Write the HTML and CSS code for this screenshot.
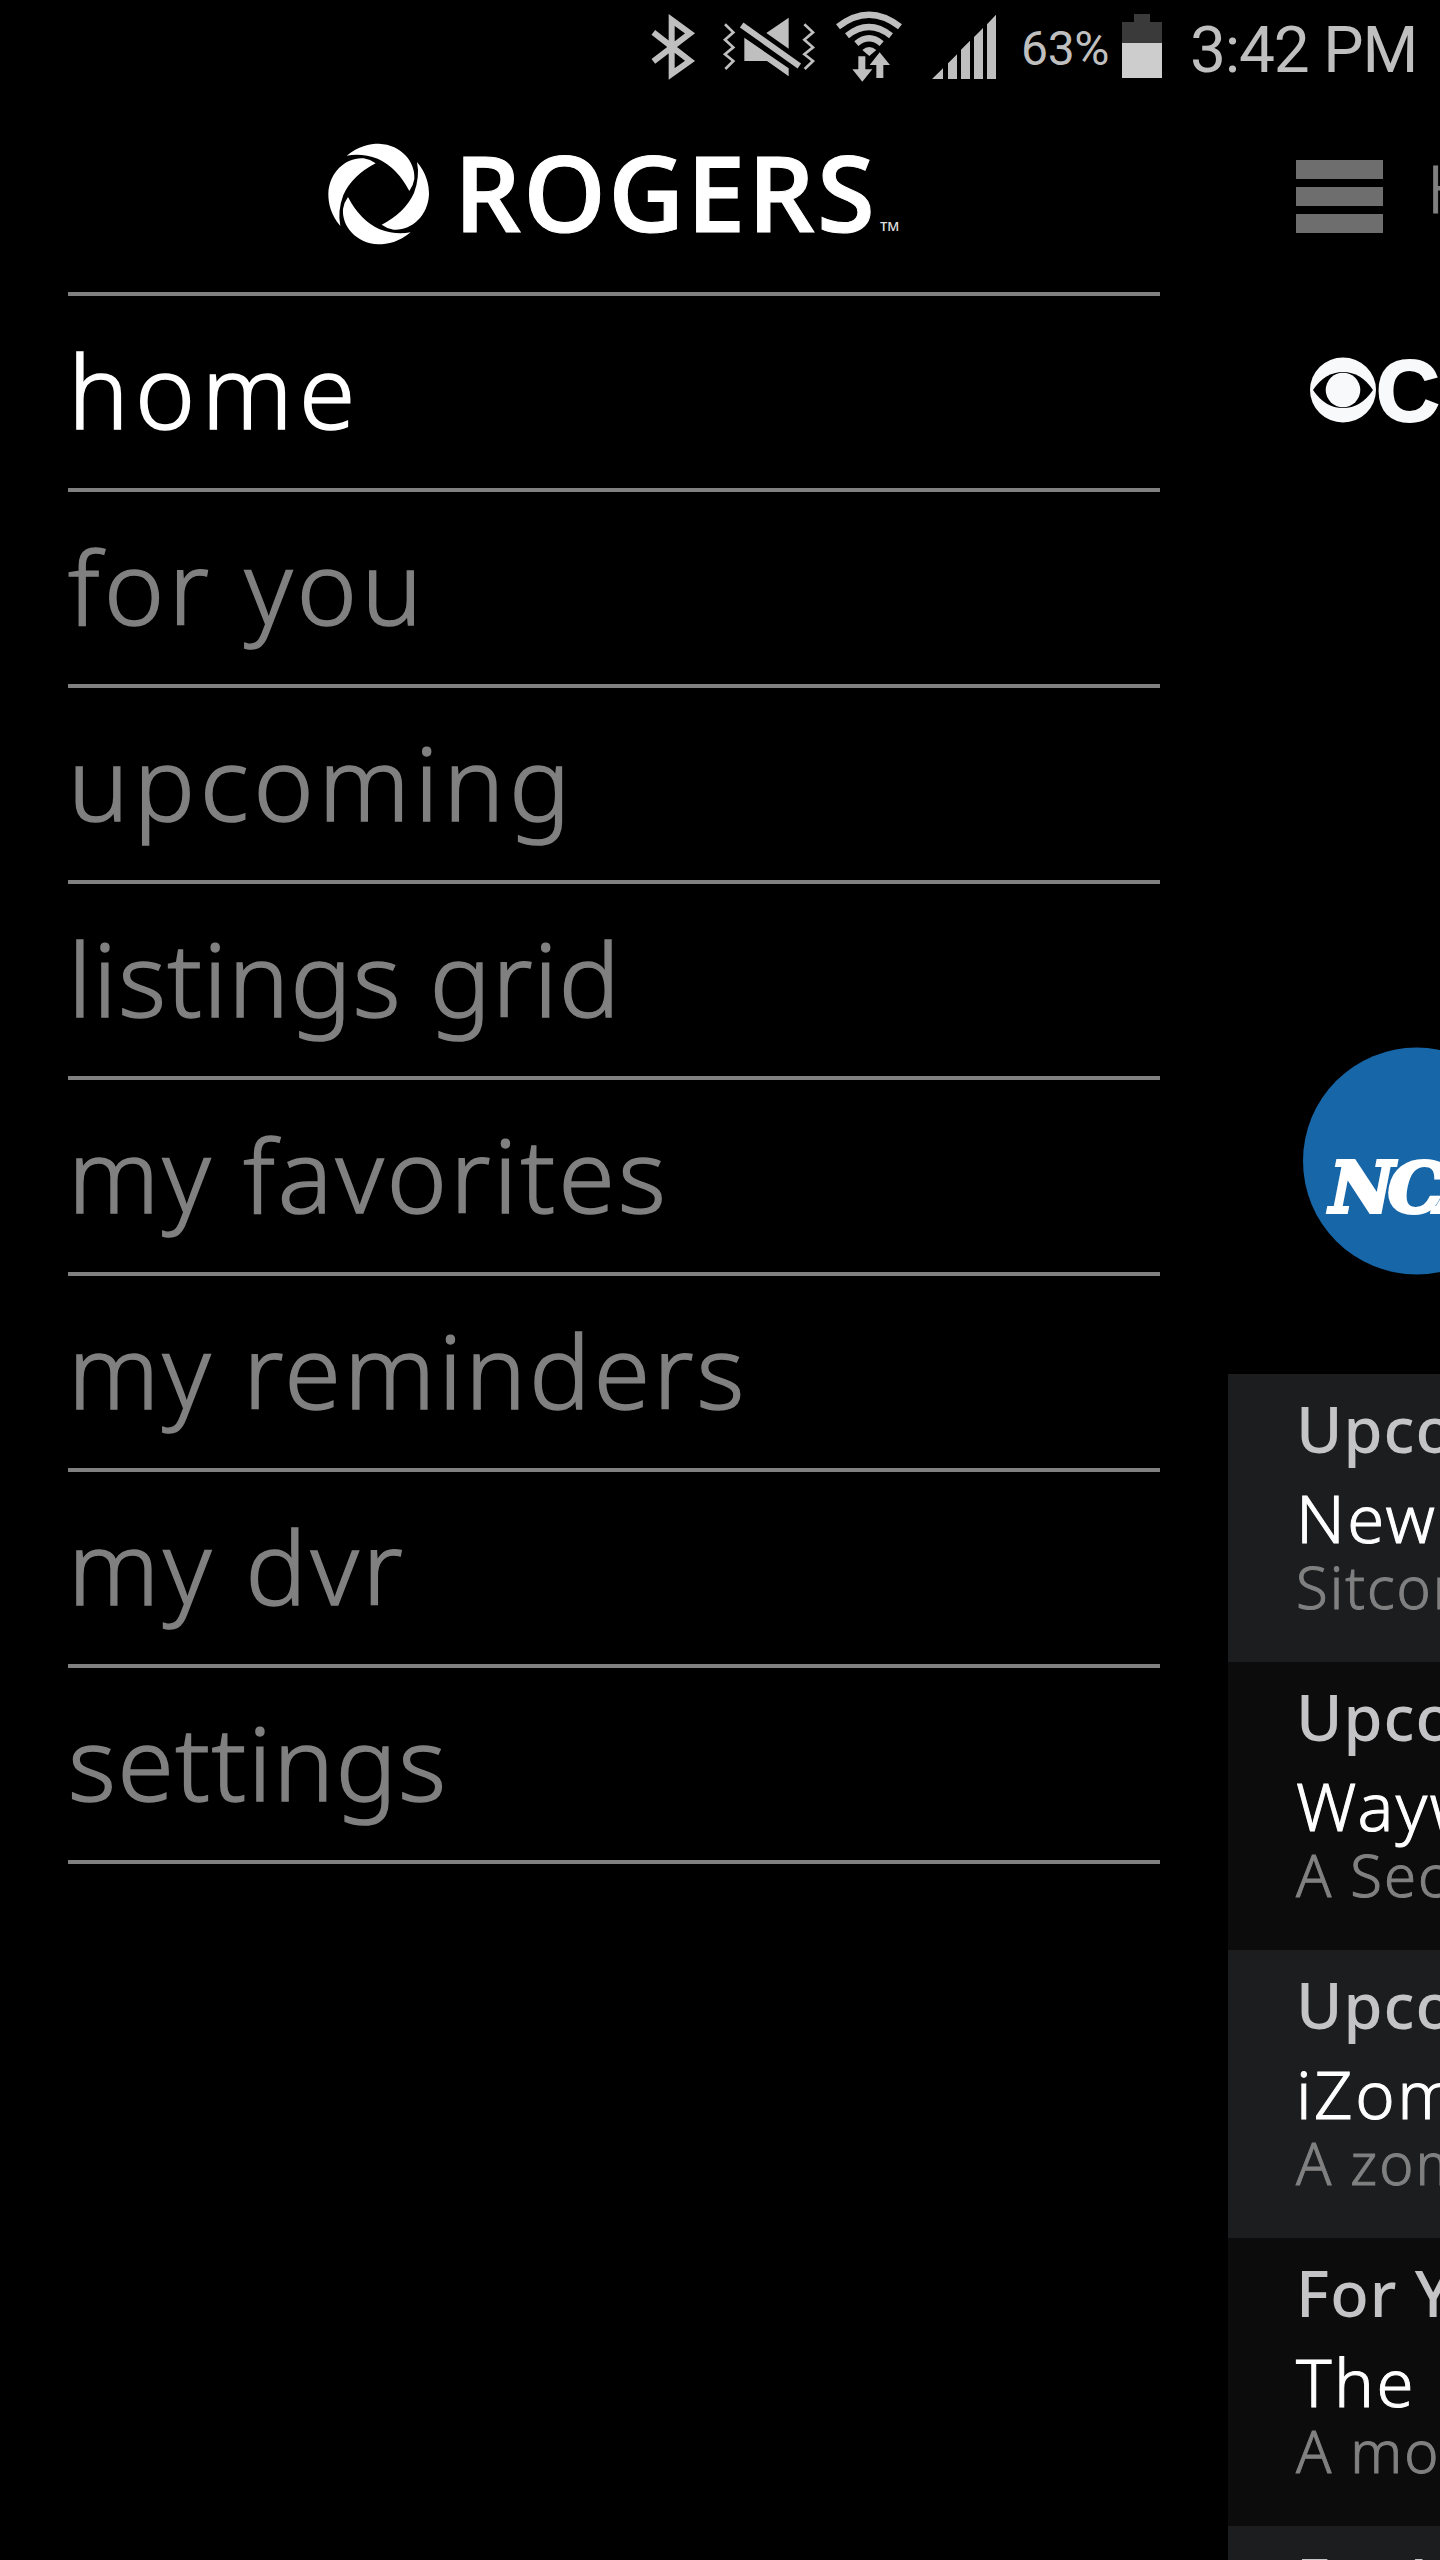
FILE: index.html
```html
<!DOCTYPE html>
<html lang="en">
<head>
    <meta charset="UTF-8">
    <meta name="viewport" content="width=device-width, initial-scale=1.0">
    <title>Rogers</title>
    <link rel="stylesheet" href="styles.css">
</head>
<body>
    <div class="status-bar">
        <svg class="status-icons" width="370" height="100" viewBox="0 0 1110 300">
            <!-- bluetooth -->
            <path d="M70 97L180 183L125 222V60L180 100L70 184" fill="none" stroke="#bfbfbf" stroke-width="18"/>
            <!-- vibrate / muted -->
            <g fill="none" stroke="#bfbfbf" stroke-width="8">
                <path d="M285 73L310 97L285 119L310 142L285 163L310 183L286 207"/>
                <path d="M523 73L549 97L523 119L549 142L523 163L549 183L524 207"/>
            </g>
            <path d="M335 75L508 198" stroke="#bfbfbf" stroke-width="18"/>
            <path d="M476 53V146L409 99ZM343 113L476 205V229L411 183H343Z" fill="#bfbfbf"/>
            <!-- wifi -->
            <g fill="none" stroke="#bfbfbf" stroke-width="19">
                <path d="M624 80Q717 8 810 80"/>
                <path d="M651 107Q717 55 783 107"/>
                <path d="M679 131Q717 99 755 131"/>
            </g>
            <path d="M697 150Q717 132 739 150L718 168ZM685 169H706V208H727L697 245L667 208H685ZM739 234V195H719L749 157L780 195H760V234Z" fill="#bfbfbf"/>
            <!-- signal -->
            <path d="M906 237L939 205V237ZM954 237V190L981 163V237ZM993 237V149L1020 122V237ZM1032 237V111L1059 84V237ZM1071 237V73L1098 44V237Z" fill="#bfbfbf"/>
        </svg>
        <span class="battery-text">63%</span>
        <svg class="battery" width="40" height="64" viewBox="0 0 40 64">
            <path d="M12 0H28V8H40V29H0V8H12Z" fill="#3a3a3a"/>
            <rect y="29" width="40" height="35" fill="#cdcdcd"/>
        </svg>
        <span class="clock">3:42 PM</span>
    </div>

    <div class="screen">
        <div class="menu">
            <div class="brand">
                <svg class="brand-logo" width="102" height="102" viewBox="54 37 306 306">
                    <defs>
                        <path id="blade" d="M110 75C145 46 178 39 207 39C275 42 317 95 313 145Q310 165 298 181Q262 111 203 84Q155 66 110 75Z"/>
                    </defs>
                    <g fill="#fff">
                        <use href="#blade"/>
                        <use href="#blade" transform="rotate(90 206 190)"/>
                        <use href="#blade" transform="rotate(180 206 190)"/>
                        <use href="#blade" transform="rotate(270 206 190)"/>
                    </g>
                </svg>
                <span class="brand-name">ROGERS</span>
                <span class="brand-tm">TM</span>
            </div>
            <ul class="menu-list">
                <li class="active home">home</li>
                <li class="for-you">for you</li>
                <li class="upcoming">upcoming</li>
                <li class="listings">listings grid</li>
                <li class="favorites">my favorites</li>
                <li class="reminders">my reminders</li>
                <li class="dvr">my dvr</li>
                <li class="settings">settings</li>
            </ul>
        </div>

        <div class="content">
            <div class="toolbar">
                <div class="hamburger"><i></i><i></i><i></i></div>
                <span class="page-title">Home</span>
            </div>
            <svg class="cbs" width="132" height="70" viewBox="0 0 132 70">
                <ellipse cx="35" cy="35" rx="33" ry="32.5" fill="#f8f9fa"/>
                <path d="M5 35Q17 17 35 17Q53 17 65 35Q53 53 35 53Q17 53 5 35Z" fill="#000"/>
                <circle cx="35" cy="35" r="17.3" fill="#f8f9fa"/>
                <text class="cbs-text" x="68" y="66">CBS</text>
            </svg>
            <svg class="ncaa" width="138" height="228" viewBox="0 0 138 228">
                <circle cx="114.5" cy="114" r="113.5" fill="#1666a8"/>
                <text class="ncaa-text" x="28" y="165">NCAA</text>
            </svg>
            <div class="shows">
                <div class="show"><h2>Upcoming</h2><h3>New Girl</h3><p>Sitcom</p></div>
                <div class="show"><h2>Upcoming</h2><h3>Wayward</h3><p>A Secret</p></div>
                <div class="show"><h2>Upcoming</h2><h3>iZombie</h3><p>A zombie</p></div>
                <div class="show"><h2>For You</h2><h3>The Blacklist</h3><p>A most</p></div>
                <div class="show"><h2>For You</h2></div>
            </div>
        </div>
    </div>
</body>
</html>
```
FILE: styles.css
```css
* {
    box-sizing: border-box;
}
body {
    margin: 0;
    width: 1440px;
    height: 2560px;
    overflow: hidden;
    background: #000;
    font-family: "Noto Sans", sans-serif;
    color: #808080;
}
.status-bar {
    display: flex;
    align-items: flex-start;
    height: 100px;
    padding-left: 630px;
    font-family: Roboto, sans-serif;
    color: #bfbfbf;
    white-space: nowrap;
}
.status-icons {
    flex: none;
}
.battery-text {
    width: 122px;
    padding: 17px 0 0 21px;
    font-size: 48px;
    line-height: 64px;
    letter-spacing: -0.3px;
}
.battery {
    flex: none;
    margin-top: 14px;
}
.clock {
    padding: 19px 0 0 28px;
    font-size: 64px;
    line-height: 64px;
    letter-spacing: -1.2px;
}
.screen {
    display: flex;
    height: 2460px;
}
.menu {
    width: 1228px;
    padding: 0 68px;
}
.brand {
    display: flex;
    height: 192px;
    padding-left: 260px;
}
.brand-logo {
    margin-top: 43px;
}
.brand-name {
    width: 415px;
    margin: 40px 0 0 24px;
    font-family: "Open Sans", sans-serif;
    font-size: 105px;
    font-weight: 600;
    line-height: 104px;
    letter-spacing: 2.3px;
    color: #fff;
    -webkit-text-stroke: 1px #fff;
}
.brand-tm {
    margin: 116px 0 0 11px;
    font-family: "Open Sans", sans-serif;
    font-size: 13px;
    font-weight: 600;
    line-height: 20px;
    color: #ddd;
}
.menu-list {
    margin: 0;
    padding: 0;
    list-style: none;
    border-top: 4px solid #808080;
}
.menu-list li {
    height: 196px;
    border-bottom: 4px solid #808080;
    font-size: 102px;
    font-weight: 300;
    line-height: 187px;
    letter-spacing: 3.2px;
    white-space: nowrap;
    -webkit-text-stroke: 1.5px currentColor;
}
.menu-list .active {
    color: #fff;
}
.menu-list .home {
    letter-spacing: 6.3px;
}
.menu-list .for-you {
    letter-spacing: 4.5px;
}
.menu-list .upcoming {
    letter-spacing: 5px;
}
.menu-list .listings {
    letter-spacing: 1.3px;
}
.menu-list .dvr {
    letter-spacing: 4px;
}
.menu-list .settings {
    letter-spacing: 1.6px;
}
.content {
    display: flex;
    flex-direction: column;
    width: 212px;
    overflow: hidden;
}
.toolbar {
    display: flex;
    flex: none;
    height: 192px;
    padding-left: 68px;
}
.hamburger {
    display: flex;
    flex: none;
    flex-direction: column;
    gap: 8px;
    width: 87px;
    margin-top: 60px;
}
.hamburger i {
    height: 19px;
    background: #6e6e6e;
}
.page-title {
    margin: 48px 0 0 44px;
    font-size: 67px;
    font-weight: 300;
    line-height: 78px;
    -webkit-text-stroke: 1px currentColor;
}
.cbs {
    flex: none;
    margin: 63px 0 0 80px;
}
.cbs-text {
    font: bold 88px "Liberation Sans", Arial, sans-serif;
    fill: #f8f9fa;
    stroke: #f8f9fa;
    stroke-width: 2px;
}
.ncaa {
    flex: none;
    margin: 622px 0 0 74px;
}
.ncaa-text {
    font: italic bold 70px "DejaVu Serif", serif;
    letter-spacing: -6px;
    fill: #fff;
    stroke: #fff;
    stroke-width: 4px;
}
.shows {
    flex: none;
    margin-top: 99px;
}
.show {
    height: 288px;
    padding: 17px 0 0 68px;
    background: #1c1d1e;
    white-space: nowrap;
}
.show:nth-child(even) {
    background: #0c0c0c;
}
.show h2,
.show h3,
.show p {
    margin: 0;
}
.show h2 {
    font-size: 63px;
    font-weight: 500;
    line-height: 76px;
    letter-spacing: 1px;
    color: #c4c4c6;
}
.show h3 {
    margin-top: 10px;
    font-size: 67px;
    font-weight: 300;
    line-height: 80px;
    letter-spacing: 2.5px;
    color: #fff;
    -webkit-text-stroke: 1px currentColor;
}
.show p {
    font-size: 58px;
    font-weight: 300;
    line-height: 60px;
    letter-spacing: 2px;
    -webkit-text-stroke: 1px currentColor;
}
```
